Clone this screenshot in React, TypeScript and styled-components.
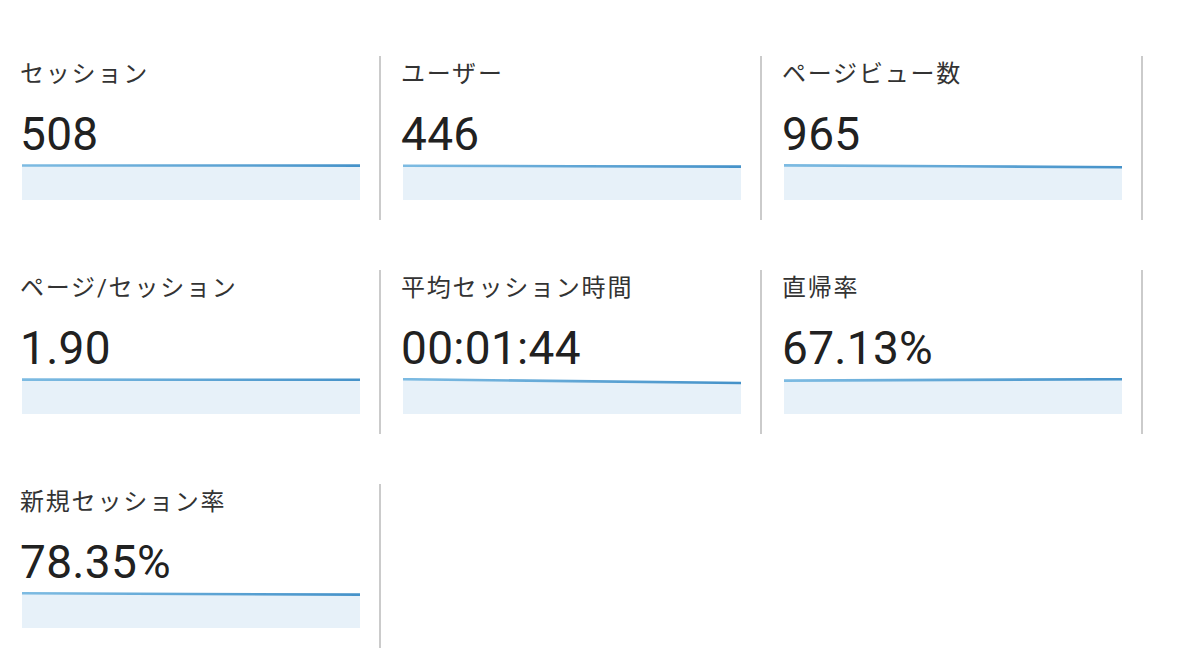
import React, { useId } from 'react';
import styled, { createGlobalStyle } from 'styled-components';

const GlobalStyle = createGlobalStyle`
  html, body {
    margin: 0;
    padding: 0;
    background: #ffffff;
  }
  body {
    font-family: Roboto, "Noto Sans CJK JP", sans-serif;
  }
`;

const Grid = styled.div`
  display: grid;
  grid-template-columns: repeat(3, 381px);
  row-gap: 50px;
  padding-top: 56px;
`;

const Card = styled.div`
  height: 164px;
  box-sizing: border-box;
  padding: 2px 0 0 20px;
  border-right: 2px solid #cbcbcb;
  display: flex;
  flex-direction: column;
`;

const Label = styled.div`
  font-size: 24px;
  line-height: 32px;
  letter-spacing: 1.8px;
  color: #333333;
  white-space: nowrap;
`;

const Value = styled.div`
  margin-top: 16px;
  font-size: 46px;
  line-height: 56px;
  color: #212121;
  letter-spacing: 0.3px;
`;

const ChartBox = styled.div`
  margin: 2px 0 0 2px;
  width: 338px;
  height: 36px;

  svg {
    display: block;
    filter: blur(0.35px);
  }
`;

type Metric = {
  label: string;
  value: string;
  // line height at the left and right ends of the sparkline (px from top)
  from: number;
  to: number;
};

const metrics: Metric[] = [
  { label: 'セッション', value: '508', from: 1.5, to: 1.6 },
  { label: 'ユーザー', value: '446', from: 1.8, to: 2.6 },
  { label: 'ページビュー数', value: '965', from: 1.4, to: 3.2 },
  { label: 'ページ/セッション', value: '1.90', from: 1.6, to: 1.8 },
  { label: '平均セッション時間', value: '00:01:44', from: 1.2, to: 5.0 },
  { label: '直帰率', value: '67.13%', from: 2.6, to: 1.2 },
  { label: '新規セッション率', value: '78.35%', from: 1.3, to: 2.6 },
];

const W = 338;
const H = 36;

const Sparkline: React.FC<{ from: number; to: number }> = ({ from, to }) => {
  const id = useId().replace(/:/g, '');
  const mid = (from + to) / 2;
  const line = `M0,${from} L${W * 0.5},${mid} L${W},${to}`;
  return (
    <svg width={W} height={H} viewBox={`0 0 ${W} ${H}`}>
      <defs>
        <linearGradient
          id={`stroke-${id}`}
          gradientUnits="userSpaceOnUse"
          x1="0"
          x2={W}
          y1="0"
          y2="0"
        >
          <stop offset="0" stopColor="#7dbbe2" />
          <stop offset="1" stopColor="#4592c9" />
        </linearGradient>
      </defs>
      <path d={`${line} L${W},${H} L0,${H} Z`} fill="#e7f1f9" />
      <path d={line} fill="none" stroke={`url(#stroke-${id})`} strokeWidth={2.6} />
    </svg>
  );
};

export default function App() {
  return (
    <>
      <GlobalStyle />
      <Grid>
        {metrics.map((m) => (
          <Card key={m.label}>
            <Label>{m.label}</Label>
            <Value>{m.value}</Value>
            <ChartBox>
              <Sparkline from={m.from} to={m.to} />
            </ChartBox>
          </Card>
        ))}
      </Grid>
    </>
  );
}
